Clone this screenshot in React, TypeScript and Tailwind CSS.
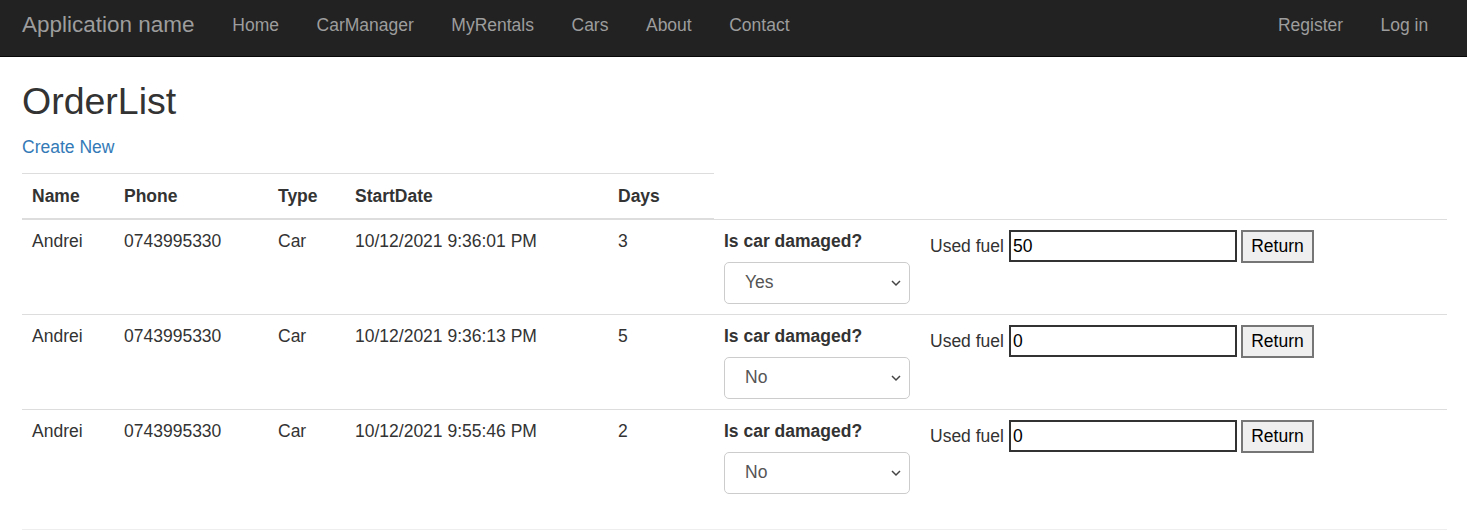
import React from "react";

const orders = [
  { name: "Andrei", phone: "0743995330", type: "Car", start: "10/12/2021 9:36:01 PM", days: 3, damaged: "Yes", fuel: "50" },
  { name: "Andrei", phone: "0743995330", type: "Car", start: "10/12/2021 9:36:13 PM", days: 5, damaged: "No", fuel: "0" },
  { name: "Andrei", phone: "0743995330", type: "Car", start: "10/12/2021 9:55:46 PM", days: 2, damaged: "No", fuel: "0" },
];

const navLinks = ["Home", "CarManager", "MyRentals", "Cars", "About", "Contact"];

const Navbar = () => {
  return (
    <nav className="h-[57px] bg-[#222222] border-b border-[#080808] flex items-center pb-[6px]">
      <a className="ml-[22px] mr-[19px] text-[22.5px] text-[#9d9d9d] leading-none">Application name</a>
      {navLinks.map((l) => (
        <a key={l} className="px-[18.75px] text-[17.5px] text-[#9d9d9d]">
          {l}
        </a>
      ))}
      <div className="ml-auto mr-[20px] flex">
        <a className="px-[18.75px] text-[17.5px] text-[#9d9d9d]">Register</a>
        <a className="px-[18.75px] text-[17.5px] text-[#9d9d9d]">Log in</a>
      </div>
    </nav>
  );
};

const DamageSelect = ({ value }: { value: string }) => {
  return (
    <div className="relative w-[186px] mt-[8px]">
      <select
        defaultValue={value}
        className="appearance-none w-full h-[42px] border border-[#cccccc] rounded-[5px] pl-[20px] text-[17.5px] text-[#555555] bg-white"
      >
        <option>Yes</option>
        <option>No</option>
      </select>
      {/* chevron */}
      <svg className="absolute right-[9px] top-[16px] pointer-events-none" width="10" height="10" viewBox="0 0 10 10">
        <path d="M1 3 L5 7 L9 3" fill="none" stroke="#444" strokeWidth="1.5" />
      </svg>
    </div>
  );
};

export default function App() {
  return (
    <div className="min-h-[531px] bg-white text-[#333333] font-['Liberation_Sans',Arial,sans-serif]">
      <Navbar />
      <div className="px-[22px] pr-[20px]">
        <h2 className="mt-[24px] text-[37.5px] leading-[41px] text-[#333333]">OrderList</h2>
        <p className="mt-[13px] text-[17.5px] leading-[25px]">
          <a className="text-[#337ab7]">Create New</a>
        </p>
        <table className="mt-[13px] w-[1425px] table-fixed border-collapse text-[17.5px] leading-[25px]">
          <colgroup>
            <col className="w-[92px]" />
            <col className="w-[154px]" />
            <col className="w-[77px]" />
            <col className="w-[263px]" />
            <col className="w-[106px]" />
            <col className="w-[206px]" />
            <col />
          </colgroup>
          <thead>
            <tr>
              {["Name", "Phone", "Type", "StartDate", "Days"].map((h) => (
                <th
                  key={h}
                  className="text-left font-bold px-[10px] pt-[10px] pb-[9px] border-t border-b-2 border-t-[#dddddd] border-b-[#dddddd]"
                >
                  {h}
                </th>
              ))}
            </tr>
          </thead>
          <tbody>
            {orders.map((o, i) => (
              <tr key={i} className="h-[95px] align-top">
                <td className="px-[10px] pt-[9px] border-t border-[#dddddd]">{o.name}</td>
                <td className="px-[10px] pt-[9px] border-t border-[#dddddd]">{o.phone}</td>
                <td className="px-[10px] pt-[9px] border-t border-[#dddddd]">{o.type}</td>
                <td className="px-[10px] pt-[9px] border-t border-[#dddddd]">{o.start}</td>
                <td className="px-[10px] pt-[9px] border-t border-[#dddddd]">{o.days}</td>
                <td className="px-[10px] pt-[9px] border-t border-[#dddddd]">
                  <label className="font-bold">Is car damaged?</label>
                  <DamageSelect value={o.damaged} />
                </td>
                <td className="px-[10px] pt-[10px] border-t border-[#dddddd]">
                  <div className="flex items-center">
                    <span className="mr-[5px]">Used fuel</span>
                    <input
                      defaultValue={o.fuel}
                      className="w-[228px] h-[32px] border-2 border-[#333333] px-[2px] text-[17.5px] text-black outline-none"
                    />
                    <button className="ml-[4px] w-[73px] h-[33px] bg-[#efefef] border-2 border-[#767676] text-[17.5px] text-black">
                      Return
                    </button>
                  </div>
                </td>
              </tr>
            ))}
          </tbody>
        </table>
        <div className="mt-[25px] border-t border-[#eeeeee]" />
      </div>
    </div>
  );
}
